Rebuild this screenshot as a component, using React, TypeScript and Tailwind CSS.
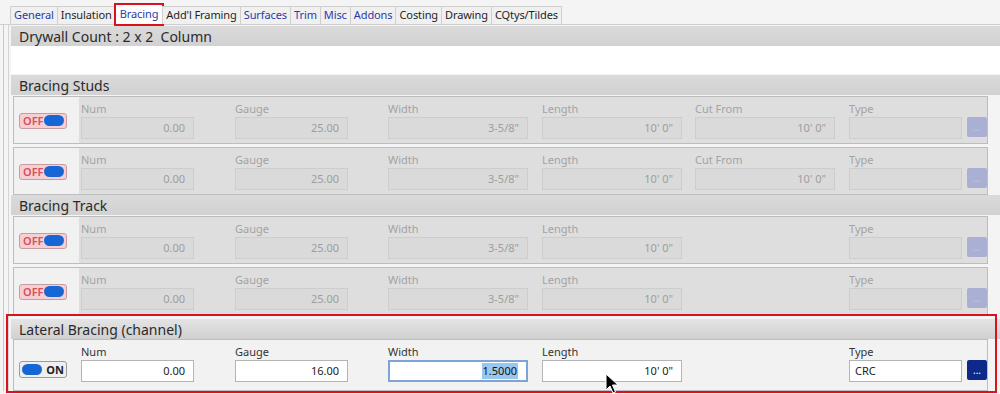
import React from 'react';

const FONT = { fontFamily: '"Noto Sans", "Open Sans", sans-serif' };

const tabs = [
  { label: 'General', blue: true },
  { label: 'Insulation', blue: false },
  { label: 'Bracing', blue: true, active: true },
  { label: "Add'l Framing", blue: false },
  { label: 'Surfaces', blue: true },
  { label: 'Trim', blue: true },
  { label: 'Misc', blue: true },
  { label: 'Addons', blue: true },
  { label: 'Costing', blue: false },
  { label: 'Drawing', blue: false },
  { label: 'CQtys/Tildes', blue: false },
];

interface Field {
  label: string;
  value: string;
  width: string;
  gap: string;
  align?: 'left' | 'right';
  selected?: boolean;
}

function Toggle({ on }: { on: boolean }) {
  if (on) {
    return (
      <div className="flex items-center w-[48px] h-[17px] rounded-[3px] border border-[#9a9a9a] bg-[#efefef] px-[2px]">
        <div className="w-[22px] h-[11px] rounded-full bg-[#1766d6]" />
        <span className="ml-[4px] text-[11px] font-bold text-[#222] leading-none">ON</span>
      </div>
    );
  }
  return (
    <div className="flex items-center justify-between w-[48px] h-[16px] rounded-[3px] border border-[#c39da2] bg-[#f7cfd3] pl-[3px] pr-[2px]">
      <span className="text-[11px] font-semibold text-[#d4505c] leading-none">OFF</span>
      <div className="w-[21px] h-[11px] rounded-full bg-[#1766d6]" />
    </div>
  );
}

function FieldCol({ f, enabled }: { f: Field; enabled: boolean }) {
  return (
    <div className={`flex flex-col ${f.gap}`}>
      <div className={`h-[16px] text-[11px] leading-[16px] ${enabled ? 'text-[#333]' : 'text-[#a3a3a3]'}`}>{f.label}</div>
      <div
        className={`${f.width} h-[22px] flex items-center text-[11px] ${f.align === 'left' ? 'justify-start pl-[5px]' : 'justify-end pr-[8px]'} ${
          enabled
            ? f.selected
              ? 'bg-white border-2 border-[#7ea3d6] text-[#111]'
              : 'bg-white border border-[#b4b4b4] text-[#222]'
            : 'bg-[#dadada] border border-[#cdcdcd] text-[#9e9e9e]'
        }`}
      >
        {f.selected ? <span className="bg-[#99c8ef] px-[1px]">{f.value}</span> : f.value}
      </div>
    </div>
  );
}

function Row({ fields, enabled, cutFrom }: { fields: Field[]; enabled: boolean; cutFrom: boolean }) {
  return (
    <div
      className={`ml-[2px] mr-[12px] flex border border-[#bdbdbd] ${enabled ? 'h-[52px] bg-[#f2f2f2]' : 'h-[48px] bg-[#f1f1f1]'}`}
    >
      <div className={`w-[65px] flex items-center pl-[5px] ${enabled ? 'pt-[8px]' : 'pt-[1px]'}`}>
        <Toggle on={enabled} />
      </div>
      <div className={`flex-1 flex pl-[2px] ${enabled ? 'pt-[4px]' : 'pt-[4px] bg-[#dedede]'}`}>
        {fields.map((f) => (
          <FieldCol key={f.label} f={f} enabled={enabled} />
        ))}
        {!cutFrom && <div className="w-[140px] mr-[14px]" />}
        <div className="flex flex-col">
          <div className={`h-[16px] text-[11px] leading-[16px] ${enabled ? 'text-[#333]' : 'text-[#a3a3a3]'}`}>Type</div>
          <div className="flex">
            <div
              className={`w-[113px] h-[22px] flex items-center pl-[5px] text-[11px] ${
                enabled ? 'bg-white border border-[#b4b4b4] text-[#222]' : 'bg-[#dadada] border border-[#cdcdcd]'
              }`}
            >
              {enabled ? 'CRC' : ''}
            </div>
            <div
              className={`ml-[5px] w-[20px] h-[20px] rounded-[2px] flex items-center justify-center text-[10px] leading-none ${
                enabled ? 'bg-[#0d2a8a] text-white' : 'bg-[#a9b0d3] text-[#c5c9e0]'
              }`}
            >
              ...
            </div>
          </div>
        </div>
      </div>
    </div>
  );
}

function Header({ title, light }: { title: string; light?: boolean }) {
  return (
    <div
      className={`h-[20px] flex items-center pl-[8px] text-[14px] text-[#2a2a2a] whitespace-pre ${
        light ? 'bg-gradient-to-b from-[#e4e4e4] to-[#d0d0d0]' : 'bg-gradient-to-b from-[#dadada] to-[#d2d2d2]'
      }`}
    >
      {title}
    </div>
  );
}

const studFields = (enabled: boolean, cutFrom: boolean): Field[] => {
  const list: Field[] = [
    { label: 'Num', value: '0.00', width: 'w-[113px]', gap: 'mr-[41px]' },
    { label: 'Gauge', value: enabled ? '16.00' : '25.00', width: 'w-[113px]', gap: 'mr-[40px]' },
    { label: 'Width', value: enabled ? '1.5000' : '3-5/8"', width: 'w-[140px]', gap: 'mr-[14px]', selected: enabled },
    { label: 'Length', value: `10' 0"`, width: 'w-[140px]', gap: 'mr-[13px]' },
  ];
  if (cutFrom) list.push({ label: 'Cut From', value: `10' 0"`, width: 'w-[140px]', gap: 'mr-[14px]' });
  return list;
};

export default function App() {
  return (
    <div className="relative w-[1000px] h-[394px] overflow-hidden bg-[#f4f4f4]" style={FONT}>
      {/* Tabs */}
      <div className="flex items-end pl-[10px] pt-[7px] h-[25px] border-b border-[#cfcfcf]">
        {tabs.map((t) => (
          <div
            key={t.label}
            className={`relative h-[18px] px-[3px] flex items-center text-[11px] tracking-[-0.1px] border border-b-0 border-[#cfcfcf] -ml-px first:ml-0 ${
              t.active ? 'bg-white h-[20px] px-[4px]' : 'bg-[#f0f0f0]'
            } ${t.blue ? 'text-[#2b3aa8]' : 'text-[#1f1f1f]'}`}
          >
            {t.label}
            {t.active && (
              <div className="absolute -left-[2px] -right-[2px] -top-[2px] -bottom-[2px] border-2 border-[#d7141e] pointer-events-none" />
            )}
          </div>
        ))}
      </div>

      {/* Main panel */}
      <div className="ml-[3px] border-l border-[#c8c8c8] pl-[4px]">
        <div className="border-l border-[#d4d4d4] pl-[2px] pt-px">
          <Header title="Drywall Count : 2 x 2  Column" />
          <div className="h-[28px] bg-white" />
          <div className="h-px" />
          <Header title="Bracing Studs" />
          <div className="flex flex-col gap-[3px] pt-px">
            <Row fields={studFields(false, true)} enabled={false} cutFrom />
            <Row fields={studFields(false, true)} enabled={false} cutFrom />
          </div>
          <Header title="Bracing Track" />
          <div className="flex flex-col gap-[3px] pt-[1px]">
            <Row fields={studFields(false, false)} enabled={false} cutFrom={false} />
            <Row fields={studFields(false, false)} enabled={false} cutFrom={false} />
          </div>
          <div className="h-[4px]" />
          <Header title="Lateral Bracing (channel)" light />
          <Row fields={studFields(true, false)} enabled cutFrom={false} />
        </div>
      </div>

      {/* Red annotation around lateral bracing */}
      <div className="absolute left-[6px] top-[314px] w-[991px] h-[79px] border-2 border-[#d7141e] pointer-events-none" />

      {/* Mouse cursor */}
      <svg className="absolute left-[605px] top-[373px]" width="14" height="21" viewBox="0 0 14 21">
        <path d="M1 1 L1 17 L5 13 L8 20 L10.5 19 L7.5 12 L13 12 Z" fill="#000" stroke="#fff" strokeWidth="1" />
      </svg>
    </div>
  );
}
